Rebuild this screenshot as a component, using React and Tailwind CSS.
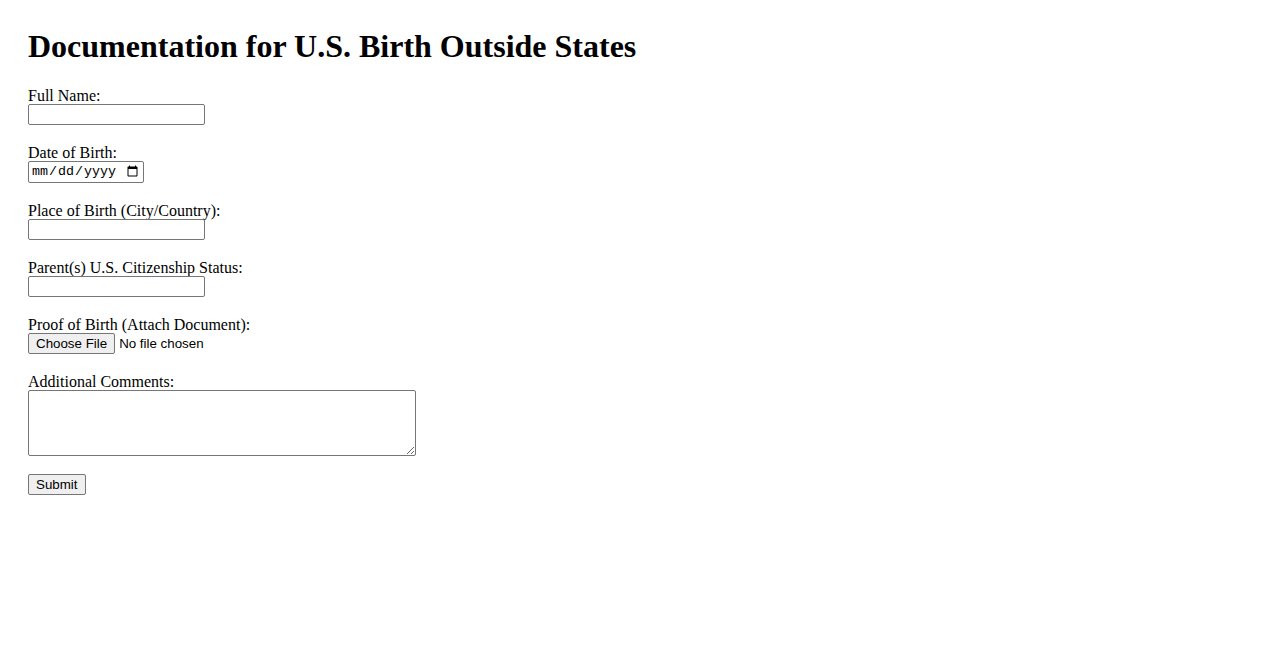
import React from 'react';

const serif = "font-['Liberation_Serif','Times_New_Roman',serif]";
const sans = "font-['Liberation_Sans',Arial,sans-serif]";

const Field = ({ label, children, last }) => (
  <div className={last ? 'mb-[18px]' : 'mb-[19px]'}>
    <label className="block h-[17px] leading-[17px] text-[16px]">{label}</label>
    <div className="flex">{children}</div>
  </div>
);

const textInput =
  'block w-[177px] h-[21px] border border-[#767676] rounded-[2px] px-[2px] text-[13.33px] bg-white outline-none';

const App = () => {
  return (
    <div className={`min-h-screen bg-white text-black ${serif} pt-[28px] pl-[28px]`}>
      <h1 className="text-[32px] font-bold leading-[37px] mb-[22px]">
        Documentation for U.S. Birth Outside States
      </h1>

      <form onSubmit={(e) => e.preventDefault()}>
        <Field label="Full Name:">
          <input type="text" className={`${textInput} ${sans}`} />
        </Field>

        <Field label="Date of Birth:">
          <input
            type="date"
            className="block w-[116px] h-[22px] border border-[#767676] rounded-[2px] pl-[2px] pr-[2px] text-[13.33px] font-['Liberation_Mono',monospace] bg-white outline-none"
          />
        </Field>

        <Field label="Place of Birth (City/Country):">
          <input type="text" className={`${textInput} ${sans}`} />
        </Field>

        <Field label="Parent(s) U.S. Citizenship Status:">
          <input type="text" className={`${textInput} ${sans}`} />
        </Field>

        <Field label="Proof of Birth (Attach Document):">
          <input
            type="file"
            className={`block h-[21px] text-[13.33px] ${sans} file:h-[21px] file:mr-[4px] file:px-[7px] file:border file:border-[#767676] file:rounded-[2px] file:bg-[#efefef] file:text-black file:text-[13.33px]`}
          />
        </Field>

        <Field label="Additional Comments:" last>
          <textarea className={`block w-[388px] h-[66px] border border-[#767676] rounded-[2px] p-[2px] text-[13.33px] ${sans} outline-none`} />
        </Field>

        <button
          type="submit"
          className={`block h-[21px] pl-[7px] pr-[8px] border border-[#767676] rounded-[2px] bg-[#efefef] text-[13.33px] ${sans}`}
        >
          Submit
        </button>
      </form>
    </div>
  );
};

export default App;
